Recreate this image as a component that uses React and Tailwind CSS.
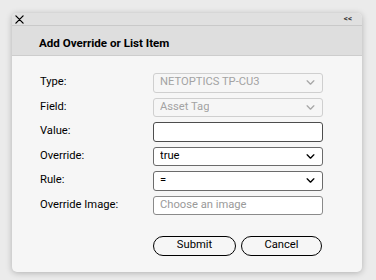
import React from "react";

const Chevron = ({ className }) => (
  <svg viewBox="0 0 10 6" className={className} fill="none" stroke="currentColor" strokeWidth="1.6" strokeLinecap="round" strokeLinejoin="round">
    <path d="M1 1l4 4 4-4" />
  </svg>
);

const SelectBox = ({ value, disabled }) => (
  <div
    className={`flex h-[19.5px] w-[170px] items-center justify-between rounded-[3px] border pl-[6px] pr-[7px] ${
      disabled
        ? "border-[#cfcfcf] bg-[#f6f6f6] text-[#a3a3a3]"
        : "border-[#6b6b6b] bg-white text-black"
    }`}
  >
    <span className="truncate">{value}</span>
    <Chevron className={`h-[5px] w-[9px] ${disabled ? "text-[#a8a8a8]" : "text-black"}`} />
  </div>
);

const TextBox = ({ placeholder, dark }) => (
  <div
    className={`flex h-[19.5px] w-[170px] items-center rounded-[3px] border pl-[6px] ${
      dark ? "border-[#4d4d4d] bg-white" : "border-[#8a8a8a] bg-white"
    }`}
  >
    {placeholder && <span className="text-[#9a9a9a]">{placeholder}</span>}
  </div>
);

const rows = [
  { label: "Type:", field: <SelectBox value="NETOPTICS TP-CU3" disabled /> },
  { label: "Field:", field: <SelectBox value="Asset Tag" disabled /> },
  { label: "Value:", field: <TextBox dark /> },
  { label: "Override:", field: <SelectBox value="true" /> },
  { label: "Rule:", field: <SelectBox value="=" /> },
  { label: "Override Image:", field: <TextBox placeholder="Choose an image" /> },
];

export default function App() {
  return (
    <div
      className="h-[280px] w-[376px] bg-[#ebebeb] px-[12px] pt-[13px] text-[11.2px] text-black"
      style={{ fontFamily: "Roboto, 'Liberation Sans', sans-serif" }}
    >
      <div className="h-[259px] w-[350px] overflow-hidden rounded-[5px] bg-[#f6f6f6] shadow-[0_1px_6px_rgba(0,0,0,0.25)]">
        <div className="flex h-[13px] items-center justify-between border-b border-[#c9c9c9] bg-[#e0e0e0] pl-[3px] pr-[10px]">
          <svg viewBox="0 0 10 10" className="h-[9px] w-[9px]" stroke="black" strokeWidth="1.4" strokeLinecap="round">
            <path d="M1 1l8 8M9 1l-8 8" />
          </svg>
          <span className="text-[8px] font-bold leading-none text-[#333]">&lt;&lt;</span>
        </div>
        <div className="h-[30px] border-b border-[#cdcdcd] bg-[#dedede] pl-[27px] pt-[10px] text-[11.6px] font-bold leading-[14px]">
          Add Override or List Item
        </div>
        <div className="pl-[28px] pt-[17px]">
          <div className="flex flex-col gap-[5px]">
            {rows.map((r) => (
              <div key={r.label} className="flex items-center">
                <div className="w-[113px]">{r.label}</div>
                {r.field}
              </div>
            ))}
          </div>
          <div className="ml-[113px] mt-[21px] flex gap-[5px]">
            <button className="h-[19.5px] w-[83px] rounded-full border border-black text-[11.2px]">Submit</button>
            <button className="h-[19.5px] w-[81px] rounded-full border border-black text-[11.2px]">Cancel</button>
          </div>
        </div>
      </div>
    </div>
  );
}
